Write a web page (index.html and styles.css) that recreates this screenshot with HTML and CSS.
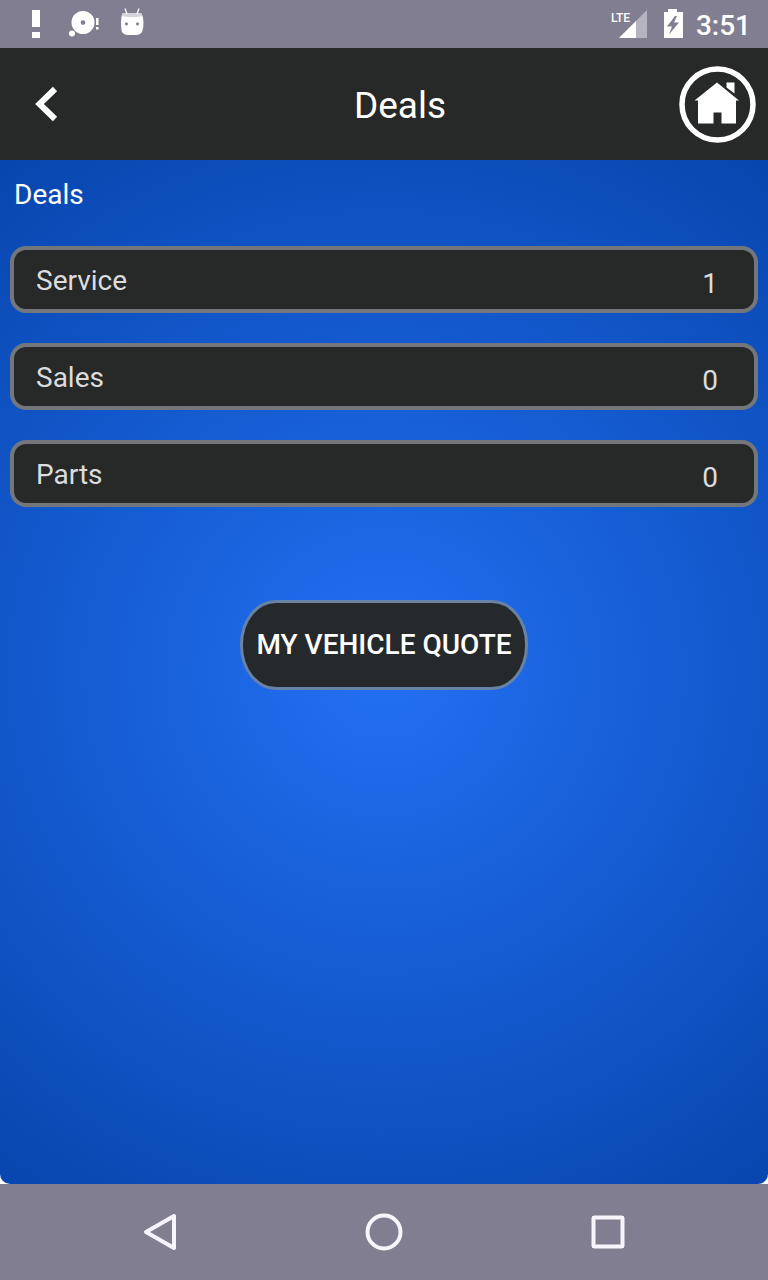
FILE: index.html
```html
<!DOCTYPE html>
<html lang="en">

<head>
    <meta charset="UTF-8">
    <meta name="viewport" content="width=device-width, initial-scale=1">
    <title>Deals</title>
    <link rel="stylesheet" href="styles.css">
</head>

<body>
    <div class="status">
        <svg class="notifications" width="150" height="48" viewBox="0 0 150 48" fill="#fff">
            <path d="M32 10h8v17h-8zM32 32h8v6h-8z" />
            <path fill-rule="evenodd" d="M83 11a11.500 11.500 0 1 1 0 23a11.500 11.500 0 1 1 0-23zM83 20.300a2.300 2.300 0 1 0 0 4.600a2.300 2.300 0 1 0 0-4.600z" />
            <circle cx="72" cy="33.500" r="3" />
            <path d="M96 18h2.500v7H96zM96 27h2.500v2.500H96z" />
            <path d="M122 14h20q1.500 4 1.500 9q0 5-1.500 9q-2 3-6 3h-8q-4 0-6-3q-1-4-1-9q0-5 1-9z" />
            <path d="M122 14q0-1 2-1h16q2 0 2 1v2q-10 2.500-20 0z" fill="#d6d4dc" />
            <path d="M125 8.500l2 5.500M139 8.500l-2 5.500" stroke="#fff" stroke-width="1.300" />
            <circle cx="126.500" cy="24" r="1.400" fill="#777580" />
            <circle cx="137.500" cy="24" r="1.400" fill="#777580" />
        </svg>
        <div class="system">
            <svg width="76" height="48" viewBox="0 0 76 48" fill="#fff">
                <path d="M39 10v28H11z" fill="#b6b2c0" />
                <path d="M28 21v17H11z" />
                <text class="network" x="3" y="22">LTE</text>
                <path fill-rule="evenodd" d="M60 9h9v3h6v26H56V12h4zM67 16l-8 10.500h5l-3 8l10-12h-5l3-6.500z" />
            </svg>
            <time class="clock">3:51</time>
        </div>
    </div>

    <header class="header">
        <button class="back" aria-label="Back">
            <svg width="24" height="38" viewBox="0 0 24 38">
                <path d="M21 4L5.500 19L21 34" fill="none" stroke="#fff" stroke-width="6" />
            </svg>
        </button>
        <h1 class="title">Deals</h1>
        <a class="home" href="#" aria-label="Home">
            <svg width="78" height="78" viewBox="0 0 78 78" fill="#fff">
                <circle cx="39.500" cy="39.500" r="35.500" fill="none" stroke="#fff" stroke-width="5.500" />
                <path d="M39 17.500L61 35.500h-3V58.500H43.500V47.500h-8v11H20V35.500h-3.500z" />
                <path d="M48.500 17.500h8v11l-8-6z" />
            </svg>
        </a>
    </header>

    <main class="content">
        <h2 class="section">Deals</h2>
        <nav class="deals">
            <a class="deal" href="#">Service <span class="count">1</span></a>
            <a class="deal" href="#">Sales <span class="count">0</span></a>
            <a class="deal" href="#">Parts <span class="count">0</span></a>
        </nav>
        <button class="quote">MY VEHICLE QUOTE</button>
    </main>

    <footer class="navbar">
        <button aria-label="Back">
            <svg width="48" height="48" viewBox="0 0 48 48">
                <path d="M38 8L10 24L38 40z" />
            </svg>
        </button>
        <button aria-label="Home">
            <svg width="48" height="48" viewBox="0 0 48 48">
                <circle cx="24" cy="24" r="16.500" />
            </svg>
        </button>
        <button aria-label="Recent apps">
            <svg width="48" height="48" viewBox="0 0 48 48">
                <rect x="9.500" y="9.500" width="29" height="29" rx="1" />
            </svg>
        </button>
    </footer>
</body>

</html>
```

FILE: styles.css
```css
* {
    box-sizing: border-box;
}

body {
    display: flex;
    flex-direction: column;
    min-height: 100vh;
    margin: 0;
    background: #fff;
    font-family: Roboto, sans-serif;
    font-size: 28px;
    color: #fff;
}

button {
    padding: 0;
    border: none;
    background: none;
    font: inherit;
    color: inherit;
    cursor: pointer;
}

a {
    color: inherit;
    text-decoration: none;
}

svg {
    display: block;
}

.status {
    display: flex;
    justify-content: space-between;
    height: 48px;
    background: #827e91;
}

.system {
    display: flex;
    gap: 12px;
    padding-right: 17px;
}

.network {
    font-size: 12px;
    font-weight: 500;
}

.clock {
    font-weight: 500;
    line-height: 52px;
}

.header {
    display: grid;
    grid-template-columns: 112px 1fr 80px;
    align-items: center;
    height: 112px;
    padding: 0 12px;
    background: #272928;
}

.back {
    justify-self: start;
    padding-left: 22px;
}

.title {
    margin: 0;
    padding-top: 2px;
    font-size: 37px;
    font-weight: 400;
    text-align: center;
}

.home {
    justify-self: end;
}

.content {
    display: flex;
    flex: 1;
    flex-direction: column;
    padding: 17px 10px;
    border-radius: 0 0 10px 10px;
    background: radial-gradient(circle 650px at 50% 50%, #2270f3, #0745ad);
}

.section {
    margin: 0 4px;
    font-size: 28px;
    font-weight: 400;
    line-height: 36px;
}

.deals {
    display: flex;
    flex-direction: column;
    gap: 30px;
    margin-top: 33px;
}

.deal {
    display: flex;
    justify-content: space-between;
    padding: 13px 36px 11px 22px;
    border: 4px solid #73777b;
    border-radius: 16px;
    background: #272928;
    line-height: 35px;
    color: #dcdcdf;
}

.count {
    padding-top: 6px;
    line-height: 29px;
}

.quote {
    align-self: center;
    margin-top: 93px;
    padding: 0 13px;
    border: 3px solid #6883a5;
    border-radius: 36px / 44px;
    background: #25292c;
    font-weight: 500;
    line-height: 84px;
}

.navbar {
    display: flex;
    justify-content: center;
    gap: 176px;
    padding: 24px 0;
    background: #827e91;
}

.navbar svg {
    fill: none;
    stroke: #f7f5fb;
    stroke-width: 4;
    stroke-linejoin: round;
}

@media (max-width: 600px) {
    .navbar {
        gap: 60px;
    }
}
```
